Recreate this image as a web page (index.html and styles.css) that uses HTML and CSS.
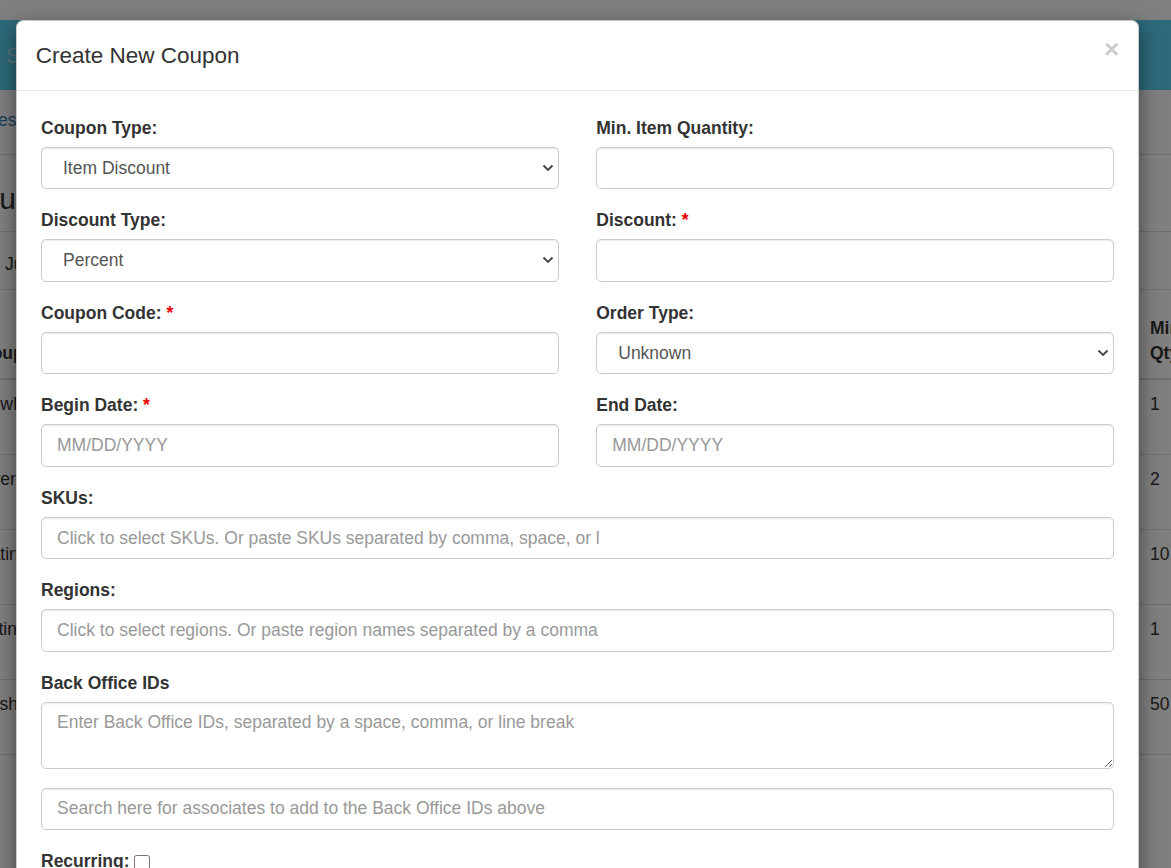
FILE: index.html
```html
<!DOCTYPE html>
<html>
<head>
<meta charset="utf-8">
<title>Create New Coupon</title>
<link rel="stylesheet" href="styles.css">
</head>
<body>
<div class="page">
  <div class="topgap"></div>
  <div class="navbar"><span class="brand">Sales Admin</span></div>
  <div class="crumbs"><a class="crumb-link">Coupon Types</a></div>
  <div class="panel-title"><h3>Coupons</h3></div>
  <div class="filter-row"><span>June 2019</span></div>
  <div class="bg-table">
    <div class="bg-row bg-head">
      <div class="cell c1">Coupon</div>
      <div class="cell c2">Description</div>
      <div class="cell c3">Min<br>Qty</div>
    </div>
    <div class="bg-row"><div class="cell c1">NewEmp</div><div class="cell c2"></div><div class="cell c3">1</div></div>
    <div class="bg-row"><div class="cell c1">Over</div><div class="cell c2"></div><div class="cell c3">2</div></div>
    <div class="bg-row"><div class="cell c1">Dating</div><div class="cell c2"></div><div class="cell c3">10</div></div>
    <div class="bg-row"><div class="cell c1">Voting</div><div class="cell c2"></div><div class="cell c3">1</div></div>
    <div class="bg-row"><div class="cell c1">Push</div><div class="cell c2"></div><div class="cell c3">50</div></div>
  </div>
</div>

<div class="backdrop"></div>

<div class="modal">
  <div class="modal-header">
    <button class="close" type="button">&times;</button>
    <h4 class="modal-title">Create New Coupon</h4>
  </div>
  <div class="modal-body">
    <form class="coupon-form">
      <div class="two-col">
        <div class="form-group">
          <label>Coupon Type:</label>
          <div class="select-wrap">
            <select class="form-control"><option>Item Discount</option></select>
            <svg class="chev" width="12" height="8" viewBox="0 0 12 8"><path d="M1.5 1.5 L6 6 L10.5 1.5" fill="none" stroke="#444" stroke-width="1.8"/></svg>
          </div>
        </div>
        <div class="form-group">
          <label>Min. Item Quantity:</label>
          <input class="form-control" type="text">
        </div>
        <div class="form-group">
          <label>Discount Type:</label>
          <div class="select-wrap">
            <select class="form-control"><option>Percent</option></select>
            <svg class="chev" width="12" height="8" viewBox="0 0 12 8"><path d="M1.5 1.5 L6 6 L10.5 1.5" fill="none" stroke="#444" stroke-width="1.8"/></svg>
          </div>
        </div>
        <div class="form-group">
          <label>Discount: <span class="req">*</span></label>
          <input class="form-control" type="text">
        </div>
        <div class="form-group">
          <label>Coupon Code: <span class="req">*</span></label>
          <input class="form-control" type="text">
        </div>
        <div class="form-group">
          <label>Order Type:</label>
          <div class="select-wrap">
            <select class="form-control"><option>Unknown</option></select>
            <svg class="chev" width="12" height="8" viewBox="0 0 12 8"><path d="M1.5 1.5 L6 6 L10.5 1.5" fill="none" stroke="#444" stroke-width="1.8"/></svg>
          </div>
        </div>
        <div class="form-group">
          <label>Begin Date: <span class="req">*</span></label>
          <input class="form-control" type="text" placeholder="MM/DD/YYYY">
        </div>
        <div class="form-group">
          <label>End Date:</label>
          <input class="form-control" type="text" placeholder="MM/DD/YYYY">
        </div>
      </div>
      <div class="form-group">
        <label>SKUs:</label>
        <input class="form-control" type="text" placeholder="Click to select SKUs. Or paste SKUs separated by comma, space, or l">
      </div>
      <div class="form-group">
        <label>Regions:</label>
        <input class="form-control" type="text" placeholder="Click to select regions. Or paste region names separated by a comma">
      </div>
      <div class="form-group">
        <label>Back Office IDs</label>
        <textarea class="form-control ta" rows="2" placeholder="Enter Back Office IDs, separated by a space, comma, or line break"></textarea>
      </div>
      <div class="form-group">
        <input class="form-control" type="text" placeholder="Search here for associates to add to the Back Office IDs above">
      </div>
      <div class="form-group">
        <label class="inline">Recurring: <input class="check" type="checkbox"></label>
      </div>
    </form>
  </div>
</div>
</body>
</html>
```

FILE: styles.css
```css
* { box-sizing: border-box; }
html, body {
  margin: 0;
  height: 868px;
  overflow: hidden;
}
body {
  font-family: "Liberation Sans", Arial, Helvetica, sans-serif;
  font-size: 17.5px;
  line-height: 25px;
  color: #333;
  background: #fff;
  position: relative;
}

/* background page */
.page {
  width: 1171px;
  overflow: hidden;
}
.topgap { height: 20px; }
.navbar {
  height: 70px;
  background: #5bd2f2;
  display: flex;
  align-items: center;
  padding-left: 6px;
}
.brand {
  color: rgba(255, 255, 255, 0.55);
  font-size: 22px;
}
.crumbs {
  height: 65px;
  padding-top: 18px;
  margin-left: -96px;
  border-bottom: 1px solid #ddd;
}
.crumb-link { color: #337ab7; }
.panel-title {
  height: 77px;
  margin-left: -39px;
  border-bottom: 1px solid #ddd;
}
.panel-title h3 {
  margin: 0;
  padding-top: 26px;
  font-size: 30px;
  font-weight: 500;
  line-height: 36px;
}
.filter-row {
  height: 58px;
  padding: 20px 0 0 5px;
  border-bottom: 1px solid #ddd;
}
.bg-table { margin-left: -22px; }
.bg-row {
  display: grid;
  grid-template-columns: 65px 1097px 80px;
  height: 75px;
  border-bottom: 1px solid #ddd;
}
.bg-head {
  height: 90px;
  font-weight: bold;
  align-items: end;
  border-bottom: 2px solid #ddd;
}
.bg-head .c1 { margin-left: 1px; }
.bg-head .cell { padding-bottom: 12px; }
.cell { padding: 12px 0 0 0; white-space: nowrap; }
.c3 { padding-left: 10px; }

/* dimmed backdrop */
.backdrop {
  position: absolute;
  inset: 0;
  background: rgba(0, 0, 0, 0.5);
}

/* modal */
.modal {
  position: absolute;
  left: 16px;
  top: 20px;
  width: 1123px;
  background: #fff;
  border: 1px solid rgba(0, 0, 0, 0.2);
  border-radius: 7.5px;
  box-shadow: 0 6px 19px rgba(0, 0, 0, 0.5);
}
.modal-header {
  padding: 18.75px;
  border-bottom: 1px solid #e5e5e5;
}
.modal-title {
  margin: 0;
  font-size: 22.5px;
  line-height: 31px;
  font-weight: 500;
  color: #333;
}
.close {
  float: right;
  margin-top: -4px;
  padding: 0;
  border: 0;
  background: transparent;
  font-family: "Liberation Sans", Arial, sans-serif;
  font-size: 26px;
  font-weight: bold;
  line-height: 1;
  color: #000;
  opacity: 0.2;
}
.modal-body { padding: 18.75px; }
.coupon-form {
  padding: 6.25px 5.25px 0 5.25px;
  margin: 0;
}
.two-col {
  display: grid;
  grid-template-columns: 1fr 1fr;
  column-gap: 37.5px;
}
.form-group { margin-bottom: 18.75px; }
label {
  display: block;
  font-weight: bold;
  margin-bottom: 6.25px;
  color: #333;
}
.req { color: #e00; }
.form-control {
  display: block;
  width: 100%;
  height: 42.5px;
  padding: 7.5px 15px;
  font-family: "Liberation Sans", Arial, sans-serif;
  font-size: 17.5px;
  line-height: 25px;
  color: #555;
  background: #fff;
  border: 1px solid #ccc;
  border-radius: 5px;
  box-shadow: inset 0 1.25px 1.25px rgba(0, 0, 0, 0.075);
  margin: 0;
}
.form-control::placeholder { color: #999; opacity: 1; }
.select-wrap { position: relative; }
select.form-control {
  appearance: none;
  -webkit-appearance: none;
  padding-left: 21px;
}
.chev {
  position: absolute;
  right: 5px;
  top: 17px;
  pointer-events: none;
}
.ta {
  height: 67px;
  resize: vertical;
}
.inline { display: flex; align-items: center; gap: 5px; }
.check {
  width: 16px;
  height: 16px;
  margin: 4px 0 0 0;
}
```
